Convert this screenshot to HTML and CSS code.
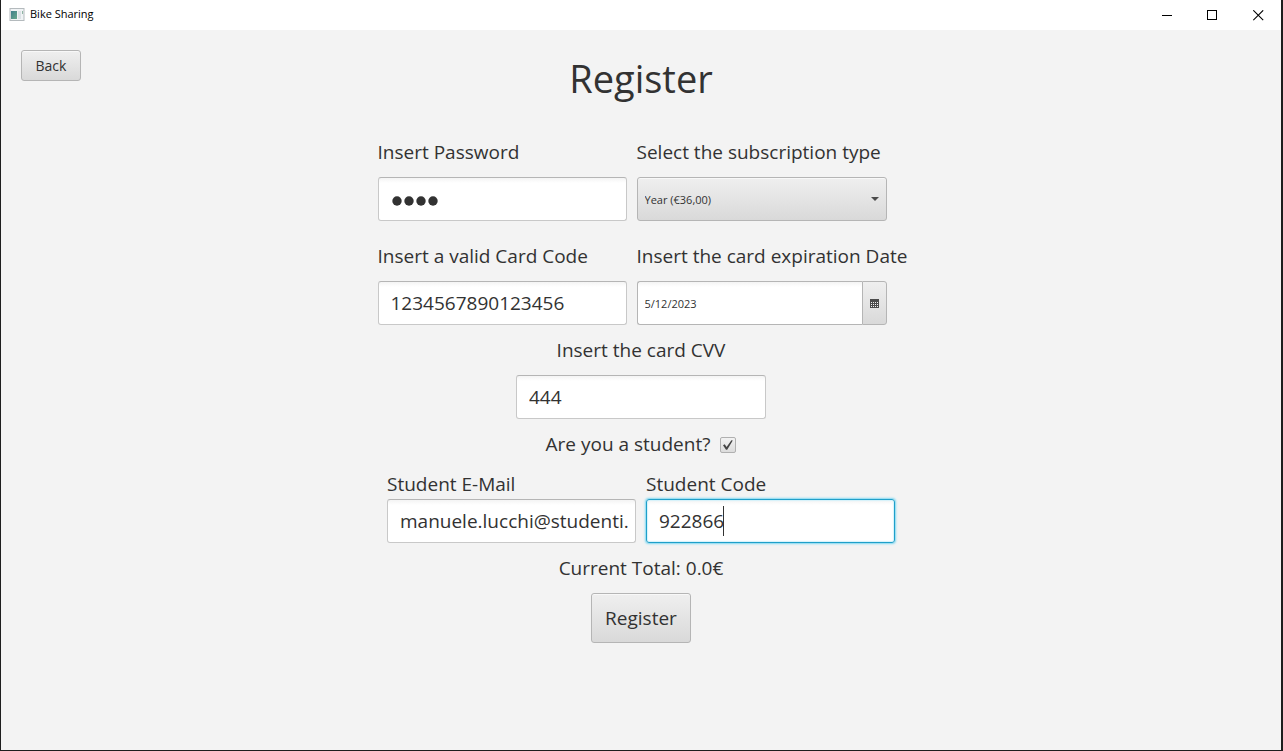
FILE: index.html
```html
<!DOCTYPE html>
<html lang="en">
<head>
<meta charset="utf-8">
<title>Bike Sharing</title>
<link rel="stylesheet" href="styles.css">
</head>
<body>
<div class="window">
  <header class="titlebar">
    <svg class="app-icon" width="16" height="14" viewBox="0 0 16 14" aria-hidden="true">
      <defs><linearGradient id="pane" x1="0" y1="0" x2="1" y2="1"><stop offset="0" stop-color="#3f7f8c"/><stop offset="1" stop-color="#68a88c"/></linearGradient></defs>
      <rect x="1" y="0.5" width="14" height="12" fill="#f0f3f5" stroke="#b4babd"/>
      <rect x="2" y="3" width="6" height="8" fill="url(#pane)"/>
      <rect x="9" y="3" width="3" height="8" fill="#dbe2e6"/>
      <rect x="13" y="3" width="1" height="3" fill="#8fb5a4"/>
    </svg>
    <span class="app-name">Bike Sharing</span>
    <div class="window-buttons">
      <button class="window-button" type="button" aria-label="Minimize"><svg width="11" height="11" viewBox="0 0 11 11"><path d="M1 5.5H11" stroke="#000" fill="none" shape-rendering="crispEdges"/></svg></button>
      <button class="window-button" type="button" aria-label="Maximize"><svg width="11" height="11" viewBox="0 0 11 11"><path d="M.5.5H9.5V9.5H.5Z" stroke="#000" fill="none" shape-rendering="crispEdges"/></svg></button>
      <button class="window-button" type="button" aria-label="Close"><svg width="11" height="11" viewBox="0 0 11 11"><path d="M.3.3L10.2 10.2M10.2.3L.3 10.2" stroke="#000" stroke-width="1.1" fill="none"/></svg></button>
    </div>
  </header>
  <main class="page">
    <button class="button back" type="button">Back</button>
    <h1 class="title">Register</h1>
    <form class="form">
      <div class="card-grid">
        <div class="field">
          <label class="label" for="password">Insert Password</label>
          <div class="input password-box">
            <input class="password" id="password" type="password" value="1234">
            <svg class="dots" width="48" height="10" viewBox="0 0 48 10" fill="#323232" aria-hidden="true"><circle cx="5" cy="5" r="4.7"/><circle cx="17" cy="5" r="4.7"/><circle cx="29" cy="5" r="4.7"/><circle cx="41" cy="5" r="4.7"/></svg>
          </div>
        </div>
        <div class="field">
          <label class="label" for="plan">Select the subscription type</label>
          <div class="select-box">
            <select class="select" id="plan"><option>Year (€36,00)</option></select>
            <svg class="arrow" width="8" height="4" viewBox="0 0 8 4" aria-hidden="true"><path d="M0 0H8L4 4Z" fill="#4b4b4b"/></svg>
          </div>
        </div>
        <div class="field">
          <label class="label" for="card">Insert a valid Card Code</label>
          <input class="input" id="card" type="text" value="1234567890123456">
        </div>
        <div class="field">
          <label class="label" for="expiry">Insert the card expiration Date</label>
          <div class="date-box">
            <input class="date" id="expiry" type="text" value="5/12/2023">
            <button class="date-button" type="button" aria-label="Choose date">
              <svg width="9" height="9" viewBox="0 0 9 9" shape-rendering="crispEdges"><path d="M0 0H9V9H0Z" fill="#4b4b4b"/><path d="M1 3.5H8M1 5.5H8M1 7.5H8" stroke="#f0f0f0" stroke-dasharray="1 1"/></svg>
            </button>
          </div>
        </div>
      </div>
      <div class="field cvv">
        <label class="label" for="cvv">Insert the card CVV</label>
        <input class="input" id="cvv" type="text" value="444">
      </div>
      <div class="student">
        <label class="label" for="student">Are you a student?</label>
        <span class="check-box">
          <input class="check" id="student" type="checkbox" checked>
          <svg class="mark" width="10" height="10" viewBox="0 0 10 10" aria-hidden="true"><path d="M0 5.2L1.7 4.2L3.6 7L8.4.3L9.8.6L4.2 9.7H3Z" fill="#444"/></svg>
        </span>
      </div>
      <div class="student-grid">
        <div class="field tight">
          <label class="label" for="mail">Student E-Mail</label>
          <input class="input" id="mail" type="text" value="manuele.lucchi@studenti.">
        </div>
        <div class="field tight">
          <label class="label" for="code">Student Code</label>
          <div class="code-box">
            <input class="input focused" id="code" type="text" value="922866">
            <span class="caret"></span>
          </div>
        </div>
      </div>
      <p class="label total">Current Total: 0.0€</p>
      <button class="button submit" type="button">Register</button>
    </form>
  </main>
</div>
</body>
</html>
```
FILE: styles.css
```css
* {
  box-sizing: border-box;
}

body {
  margin: 0;
  color: #323232;
  font-family: "Open Sans", "Noto Sans", sans-serif;
}

button,
input,
select {
  color: inherit;
  font-family: inherit;
}

.window {
  display: flex;
  flex-direction: column;
  min-height: 100vh;
  background: #f3f3f3;
  border: solid #1e1e1e;
  border-width: 0 2px 1px 1px;
}

.titlebar {
  display: flex;
  align-items: center;
  height: 30px;
  padding-left: 8px;
  background: #fff;
}

.app-icon {
  margin-right: 5px;
}

.app-name {
  color: #000;
  font-size: 11px;
  line-height: 14px;
  padding-bottom: 2px;
}

.window-buttons {
  display: flex;
  margin-left: auto;
}

.window-button {
  display: flex;
  align-items: center;
  justify-content: center;
  width: 46px;
  height: 29px;
  padding: 0;
  background: none;
  border: 0;
}

.page {
  position: relative;
  flex: 1;
  padding: 20px;
}

.button {
  background: linear-gradient(#efefef, #d9d9d9);
  border: 1px solid #b5b5b5;
  border-radius: 3px;
  box-shadow: inset 0 1px #f8f8f8;
}

.back {
  position: absolute;
  top: 20px;
  left: 20px;
  width: 60px;
  height: 31px;
  padding: 0;
  font-size: 14px;
}

.title {
  margin: 0;
  font-size: 38px;
  font-weight: 400;
  line-height: 56px;
  text-align: center;
}

.form {
  display: flex;
  flex-direction: column;
  align-items: center;
  margin-top: 33px;
}

.card-grid {
  display: grid;
  grid-template-columns: 249px 268px;
  gap: 22px 10px;
}

.student-grid {
  display: grid;
  grid-template-columns: 249px 249px;
  gap: 10px;
  margin-top: 13px;
}

.field {
  display: flex;
  flex-direction: column;
  gap: 11px;
}

.tight {
  gap: 1px;
}

.label {
  margin: 0;
  font-size: 19px;
  line-height: 27px;
  white-space: nowrap;
}

.input {
  width: 100%;
  height: 44px;
  padding: 0 6px 0 12px;
  background: linear-gradient(#f4f4f4, #fff 5px);
  border: 1px solid #c8c8c8;
  border-top-color: #b5b5b5;
  border-radius: 3px;
  font-size: 19px;
  outline: 0;
}

.password-box {
  position: relative;
}

.password {
  width: 100%;
  height: 100%;
  padding: 0;
  background: none;
  border: 0;
  color: transparent;
  outline: 0;
}

.dots {
  position: absolute;
  top: 18px;
  left: 13px;
}

.select-box,
.date-box {
  position: relative;
  display: flex;
  width: 250px;
  height: 44px;
}

.select {
  width: 100%;
  padding: 0 7px;
  appearance: none;
  background: linear-gradient(#efefef, #d9d9d9);
  border: 1px solid #b5b5b5;
  border-radius: 3px;
  box-shadow: inset 0 1px #f8f8f8;
  font-size: 11px;
}

.arrow {
  position: absolute;
  top: 20px;
  right: 8px;
}

.date {
  flex: 1;
  min-width: 0;
  padding: 0 7px;
  background: linear-gradient(#f4f4f4, #fff 5px);
  border: 1px solid #b5b5b5;
  border-right: 0;
  border-radius: 3px 0 0 3px;
  font-size: 11px;
}

.date-button {
  display: flex;
  align-items: center;
  justify-content: center;
  width: 25px;
  padding: 0;
  background: linear-gradient(#efefef, #d9d9d9);
  border: 1px solid #b5b5b5;
  border-radius: 0 3px 3px 0;
}

.cvv {
  align-items: center;
  width: 250px;
  margin-top: 12px;
}

.student {
  display: flex;
  align-items: center;
  gap: 10px;
  margin-top: 12px;
}

.check-box {
  position: relative;
  display: flex;
}

.check {
  width: 16px;
  height: 16px;
  margin: 0;
  appearance: none;
  background: linear-gradient(#f2f2f2, #dcdcdc);
  border: 1px solid #b0b0b0;
  border-radius: 2px;
}

.mark {
  position: absolute;
  top: 3px;
  left: 3px;
}

.code-box {
  position: relative;
}

.focused {
  border-color: #1f9fc9;
  box-shadow: 0 0 2px 1px #7fd8f2, inset 0 0 1px 1px #d5f2fb;
}

.caret {
  position: absolute;
  top: 7px;
  left: 77px;
  width: 1px;
  height: 30px;
  background: #323232;
}

.total {
  margin-top: 12px;
}

.submit {
  width: 100px;
  height: 50px;
  margin-top: 11px;
  padding: 0;
  font-size: 19px;
}
```
